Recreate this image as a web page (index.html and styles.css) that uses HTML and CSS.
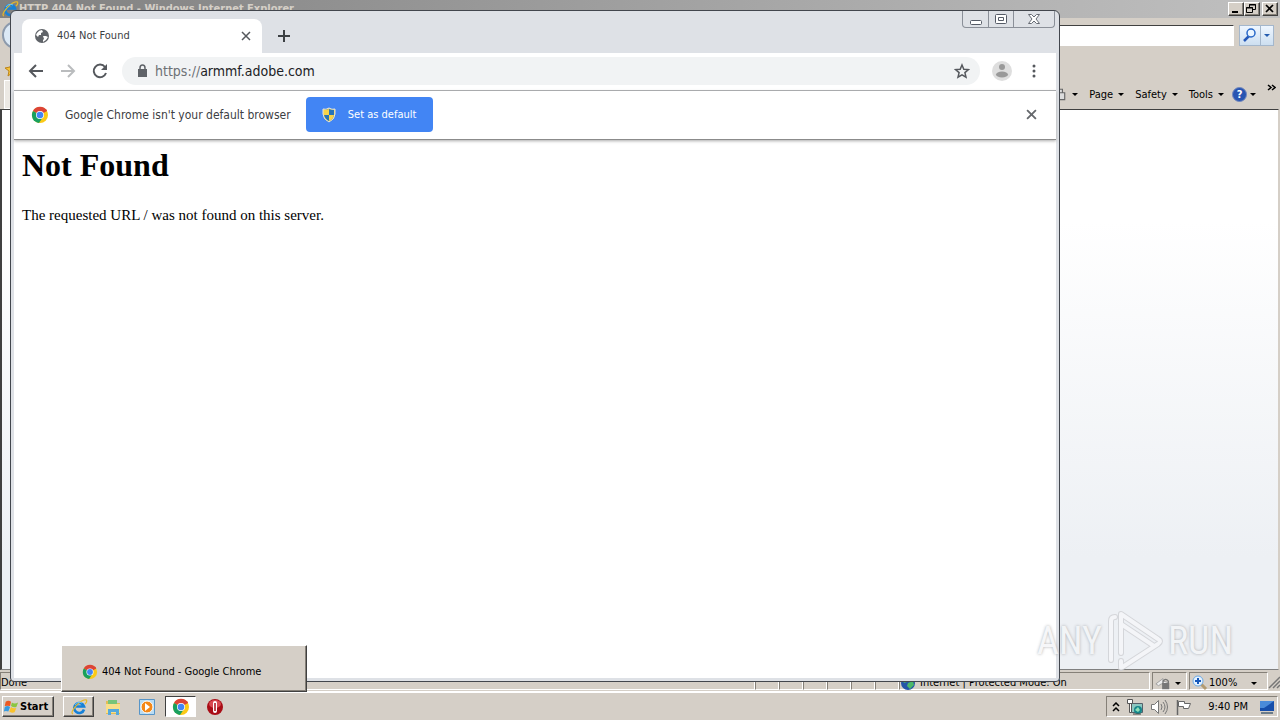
FILE: index.html
```html
<!doctype html>
<html lang="en">
  <head>
    <meta charset="UTF-8" />
    <meta name="viewport" content="width=device-width, initial-scale=1.0" />
    <title>404 Not Found</title>
    <link rel="stylesheet" href="styles.css">
  </head>

  <body>
    <svg class="defs" aria-hidden="true">
      <symbol id="chrome" viewBox="0 0 18 18">
        <circle cx="9" cy="9" r="8" fill="#fbc916" />
        <path d="M9 9 2 5a8 8 0 0 1 14 0z" fill="#dc4437" />
        <path d="M2 5a8 8 0 0 0 6 12l4-6-3-2z" fill="#18a05e" />
        <path d="M9 5h7l-1-2z" fill="#dc4437" />
        <circle cx="9" cy="9" r="4" fill="#fff" />
        <circle cx="9" cy="9" r="3.300" fill="#4385f5" />
      </symbol>
      <symbol id="ie" viewBox="0 0 18 18">
        <path d="M14 11.500A5 5 0 1 1 14 8.500H6" fill="none" stroke="#1681d8" stroke-width="2.600" />
        <path d="M3 16C-1 15 8 4 14 2c4-1 3 2 1 4" fill="none" stroke="#e8b928" stroke-width="1.200" />
        <path d="M5 7a5 5 0 0 1 7-2" fill="none" stroke="#6cc5f5" />
      </symbol>
      <symbol id="earth" viewBox="0 0 16 16">
        <circle cx="8" cy="8" r="7" fill="#2355a8" />
        <path d="M2 4l5-3 3 3-3 3-3 1zM8 8l5-2 1 4-4 4-3-3z" fill="#4cb968" />
      </symbol>
    </svg>

    <div class="desktop">
      <div class="ie">
        <div class="ie-title">
          <svg class="icon-18"><use href="#ie" /></svg>
          <span>HTTP 404 Not Found - Windows Internet Explorer</span>
          <div class="ie-controls">
            <button class="raised" aria-label="Minimize"><svg viewBox="0 0 14 12"><path d="M3 9h6" stroke="#000" stroke-width="2" /></svg></button>
            <button class="raised" aria-label="Restore"><svg viewBox="0 0 14 12" fill="none" stroke="#000"><path d="M4.500 4V1.500h6v5H8M4 2h7M1.500 4.500h6v5h-6zM1 5h7" /></svg></button>
            <button class="raised close" aria-label="Close"><svg viewBox="0 0 14 12"><path d="m3 2 7 7M10 2 3 9" stroke="#000" stroke-width="1.700" /></svg></button>
          </div>
        </div>
        <div class="ie-address">
          <button class="ie-back" aria-label="Back"></button>
          <input class="ie-url" type="text" aria-label="Address" />
          <div class="ie-search">
            <button aria-label="Search"><svg viewBox="0 0 16 16"><path d="m2 14 5-5" stroke="#2458b8" stroke-width="2.500" /><circle cx="9" cy="6" r="4" fill="#eaf5ff" stroke="#2868c8" stroke-width="1.500" /></svg></button>
            <button class="drop" aria-label="Search options"><i class="arrow blue"></i></button>
          </div>
        </div>
        <div class="ie-favorites"><svg viewBox="0 0 16 16"><path d="m8 1 2 5 5 1-4 3 1 5-4-3-4 3 1-5-4-3 5-1z" fill="#f4c23b" stroke="#bd8518" /></svg></div>
        <div class="ie-commands">
          <div class="ie-tab"></div>
          <button aria-label="Print"><svg viewBox="0 0 14 14"><path d="M2 5h10v6H2zM4 2h6v3H4z" fill="#ddd" stroke="#666" /></svg><i class="arrow"></i></button>
          <button>Page <i class="arrow"></i></button>
          <button>Safety <i class="arrow"></i></button>
          <button>Tools <i class="arrow"></i></button>
          <button class="help" aria-label="Help"><span>?</span><i class="arrow"></i></button>
          <svg class="more" viewBox="0 0 9 7"><path d="m1 1 3 2.500L1 6M5 1l3 2.500L5 6" fill="none" stroke="#000" stroke-width="1.500" /></svg>
        </div>
        <div class="ie-page"></div>
        <div class="ie-status">
          <span class="done">Done</span>
          <span class="cell"></span><span class="cell"></span><span class="cell"></span><span class="cell"></span><span class="cell"></span><span class="cell"></span>
          <span class="zone"><svg><use href="#earth" /></svg>Internet | Protected Mode: On</span>
          <span class="privacy"><svg viewBox="0 0 18 16"><path d="M1 9 9 3v3l5 1-2 3-5-1-3 2z" fill="#eee" stroke="#999" /><path d="M9 9V6q3-4 6 0v3" fill="none" stroke="#777" stroke-width="1.500" /><path d="M8 8h8v7H8z" fill="#777" /></svg><i class="arrow"></i></span>
          <span class="zoom"><svg viewBox="0 0 16 16"><path d="m9 9 5 5" stroke="#b29a70" stroke-width="3" /><circle cx="6" cy="6" r="5" fill="#e5f2ff" stroke="#6caae5" /><path d="M6 3v6M3 6h6" stroke="#1558bb" stroke-width="2" /></svg>100%<i class="arrow"></i></span>
          <svg class="grip" viewBox="0 0 12 14"><path d="M1 13 12 2M5 13l7-7M9 13l3-3" stroke="#777" stroke-width="1.500" /></svg>
        </div>
      </div>

      <div class="taskbar">
        <button class="raised start"><svg viewBox="0 0 18 18"><path d="M3 3q3-2 6 0L8 8Q5 7 2 8z" fill="#ed5a23" /><path d="M10 4q3 2 7 0l-2 5q-3 1-6-1z" fill="#8ac640" /><path d="M2 9q3-2 6 0l-2 5q-3-1-5 0z" fill="#399be0" /><path d="M9 9q3 2 6 1l-2 5q-3 1-6-1z" fill="#f9c22c" /></svg>Start</button>
        <button class="raised task" aria-label="Internet Explorer"><svg><use href="#ie" /></svg></button>
        <button class="task" aria-label="Windows Explorer"><svg viewBox="0 0 18 18"><path d="M2 3h5l1 2h8v11H2z" fill="#e3bd55" /><path d="M4 2h9v4H4z" fill="#78c478" /><path d="M2 6h14v9H2z" fill="#f8df8a" /><path d="M4 17v-6h11v6h-3v-3H7v3z" fill="#55a9dc" /></svg></button>
        <button class="task" aria-label="Media Player"><svg viewBox="0 0 18 18"><path d="M1.500 1.500h15v15h-15z" fill="#b8dcf4" stroke="#5795c8" /><circle cx="9" cy="9" r="6" fill="#f48818" stroke="#fff" /><path d="m7 5 5 4-5 4z" fill="#fff" /></svg></button>
        <button class="task pressed" aria-label="Google Chrome"><svg><use href="#chrome" /></svg></button>
        <button class="task" aria-label="Opera"><svg viewBox="0 0 18 18"><circle cx="9" cy="9" r="8" fill="#a90d16" /><ellipse cx="9" cy="6" rx="6" ry="4" fill="#d94950" /><rect x="7" y="3" width="4" height="12" rx="2" fill="#fff" /><path d="M9 5v8" stroke="#a90d16" stroke-width="1.500" /></svg></button>
        <div class="tray">
          <svg class="chevrons" viewBox="0 0 8 10"><path d="m1 4 3-3 3 3M1 9l3-3 3 3" fill="none" stroke="#000" stroke-width="1.500" /></svg>
          <svg viewBox="0 0 18 18"><path d="M5.500 5.500h11v9h-11z" fill="#8cc7c0" stroke="#55606a" /><circle cx="12" cy="12" r="4" fill="#16868a" /><path d="m9 12 3-3 2 3-2 2z" fill="#8de0b8" /><path d="M1.500 1.500h5v4h-5zM3.500 5.500v9h2v-9" fill="#fff" stroke="#555" /><path d="M7 16h8" stroke="#444" /></svg>
          <svg viewBox="0 0 18 18" fill="#fff" stroke="#777"><path d="M1.500 6.500h3l4-4v13l-4-4h-3z" /><path d="M11 6q2 3 0 6M13 4q4 5 0 10M15 2q5 7 0 14" fill="none" /></svg>
          <svg viewBox="0 0 18 18"><path d="M3.500 2v15" stroke="#666" stroke-width="1.500" /><path d="M4.500 3.500h6v2h6l-2 5h-5v-2h-5z" fill="#fff" stroke="#666" /></svg>
          <time>9:40 PM</time>
          <svg class="show-desktop" viewBox="0 0 16 16"><path d="M1 2h14v10H1z" fill="#164eaa" /><path d="M1 2h14L5 9H1z" fill="#4a8bd9" /><path d="M2 14h12" stroke="#6c7c8a" stroke-width="2" /></svg>
        </div>
      </div>

      <div class="chrome">
        <div class="tabs">
          <div class="tab">
            <svg viewBox="0 0 16 16"><circle cx="8" cy="8" r="7" fill="#5f6368" /><path d="M3 5q2-3 5-3l1 2-2 1v2H5L4 9 2 7zM9 8h3l2 1-2 3-3 2v-2l1-1z" fill="#fff" /></svg>
            <span>404 Not Found</span>
            <button aria-label="Close tab"><svg viewBox="0 0 10 10"><path d="m1 1 8 8M9 1 1 9" stroke="#55585d" stroke-width="1.500" /></svg></button>
          </div>
          <button class="new-tab" aria-label="New tab"><svg viewBox="0 0 12 12"><path d="M6 0v12M0 6h12" stroke="#3c4043" stroke-width="2" /></svg></button>
          <div class="caption">
            <button aria-label="Minimize"><svg viewBox="0 0 14 14"><rect x="1.500" y="8.500" width="11" height="4" rx="1" fill="#fff" stroke="#555b66" /></svg></button>
            <button aria-label="Maximize"><svg viewBox="0 0 14 14" fill="#fff" stroke="#555b66"><rect x="1.500" y="2.500" width="11" height="9" rx="1" /><path d="M4.500 5.500h5v3h-5z" /></svg></button>
            <button aria-label="Close"><svg viewBox="0 0 14 14"><path d="M1.500 2.500h3L7 5l2.500-2.500h3L9 7l3.500 4.500h-3L7 9l-2.500 2.500h-3L5 7z" fill="#fff" stroke="#666b74" /></svg></button>
          </div>
        </div>
        <div class="toolbar">
          <button aria-label="Back"><svg viewBox="0 0 16 16" fill="none" stroke="#55585d" stroke-width="2"><path d="M15 8H2M8 2 2 8l6 6" /></svg></button>
          <button aria-label="Forward" disabled><svg viewBox="0 0 16 16" fill="none" stroke="#babcbe" stroke-width="2"><path d="M1 8h13M8 2l6 6-6 6" /></svg></button>
          <button aria-label="Reload"><svg viewBox="0 0 16 16" fill="none" stroke="#55585d" stroke-width="2"><path d="M13 4a6.300 6.300 0 1 0 1 6" /><path d="M15 1v6H9z" fill="#55585d" stroke="none" /></svg></button>
          <div class="omnibox">
            <svg viewBox="0 0 12 14"><path d="M2 5h9v8H2z" fill="#5f6368" /><path d="M4 6V4q0-3 2.500-3T9 4v2" fill="none" stroke="#5f6368" stroke-width="1.500" /></svg>
            <a href="#"><span>https://</span>armmf.adobe.com</a>
            <button aria-label="Bookmark"><svg viewBox="0 0 16 16"><path d="m8 2 1.800 4.200 4.700.4-3.600 3 1.100 4.600L8 11.800l-4 2.400 1.100-4.600-3.600-3 4.700-.4z" fill="none" stroke="#55585d" stroke-width="1.500" /></svg></button>
          </div>
          <button class="avatar" aria-label="Profile"><svg viewBox="0 0 20 20"><circle cx="10" cy="10" r="10" fill="#dedede" /><circle cx="10" cy="6" r="3" fill="#999" /><ellipse cx="10" cy="13.500" rx="6" ry="3" fill="#999" /></svg></button>
          <button class="menu" aria-label="Menu"><svg viewBox="0 0 4 14" fill="#55585d"><circle cx="2" cy="2" r="1.500" /><circle cx="2" cy="7" r="1.500" /><circle cx="2" cy="12" r="1.500" /></svg></button>
        </div>
        <div class="infobar">
          <svg class="icon-18"><use href="#chrome" /></svg>
          <span>Google Chrome isn't your default browser</span>
          <button class="set-default"><svg viewBox="0 0 14 16"><path d="M7 1q3 2 6 1v5q0 5-6 8-6-3-6-8V2q3 1 6-1z" fill="#f7d34a" stroke="#e2e4dd" /><path d="M7 8h5q-1 4-5 6zM2 3q3 0 5-1v6H2z" fill="#2674b8" /><path d="M2 3q3 0 5-1v6H2z" fill="#f7d34a" /><path d="M7 2q2 1 5 1v5H7zM2 8h5v6Q3 12 2 8z" fill="#2674b8" /><path d="M7 8h5q-1 4-5 6z" fill="#f7d34a" /></svg>Set as default</button>
          <button class="dismiss" aria-label="Dismiss"><svg viewBox="0 0 10 10"><path d="m1 1 8 8M9 1 1 9" stroke="#66696d" stroke-width="1.700" /></svg></button>
        </div>
        <div class="page">
          <h1>Not Found</h1>
          <p>The requested URL / was not found on this server.</p>
        </div>
      </div>

      <div class="preview raised">
        <svg><use href="#chrome" /></svg>
        <span>404 Not Found - Google Chrome</span>
      </div>

      <div class="watermark">
        <span>ANY</span>
        <svg viewBox="0 0 58 64" fill="none" stroke-linejoin="round" stroke-linecap="round">
          <g stroke="#cfd0d4" stroke-width="6"><path d="M5 51V12q0-4 4-4" /><path d="M15 44V5l37 25q4 2 0 5L15 59v-7" /><path d="M15 15l33 22" /></g>
          <g stroke="#f6f7f9" stroke-width="4"><path d="M5 51V12q0-4 4-4" /><path d="M15 44V5l37 25q4 2 0 5L15 59v-7" /><path d="M15 15l33 22" /></g>
        </svg>
        <span>RUN</span>
      </div>
    </div>
  </body>
</html>
```
FILE: styles.css
```css
* {
  box-sizing: border-box;
}

body {
  margin: 0;
  font-family: "DejaVu Sans Condensed", "DejaVu Sans", sans-serif;
  font-size: 11px;
  line-height: 16px;
  color: #000;
}

button {
  display: flex;
  align-items: center;
  justify-content: center;
  padding: 0;
  border: 0;
  background: none;
  font: inherit;
  color: inherit;
}

svg {
  display: block;
  flex: none;
  width: 16px;
  height: 16px;
}

.defs {
  position: absolute;
  width: 0;
  height: 0;
}

.icon-18 {
  width: 18px;
  height: 18px;
}

.desktop {
  position: relative;
  display: flex;
  flex-direction: column;
  height: 100vh;
  overflow: hidden;
  background: #d5cfc7;
}

.raised {
  border: 1px solid;
  border-color: #fff #404040 #404040 #fff;
  box-shadow: inset -1px -1px #858078;
  background: #d5cfc7;
}

.arrow {
  border: 3px solid transparent;
  border-top-color: #000;
  border-bottom: 0;
}

.arrow.blue {
  border-top-color: #245caf;
}

/* Internet Explorer */
.ie {
  display: flex;
  flex: 1;
  flex-direction: column;
  min-height: 0;
}

.ie-title {
  display: flex;
  align-items: center;
  height: 18px;
  padding: 0 2px 0 1px;
  background: linear-gradient(90deg, #808080, #c0c0c0);
  color: #d5cfc7;
  font-weight: bold;
}

.ie-controls {
  display: flex;
  margin-left: auto;
}

.ie-controls button {
  width: 16px;
  height: 14px;
}

.ie-controls svg {
  width: 14px;
  height: 12px;
}

.ie-controls .close {
  margin-left: 2px;
}

.ie-address {
  display: flex;
  align-items: center;
  height: 34px;
  padding: 0 6px 0 2px;
}

.ie-back {
  width: 28px;
  height: 28px;
  border: 2px solid #8c9aac;
  border-radius: 50%;
  background: #dce9f5;
}

.ie-url {
  flex: 1;
  height: 21px;
  margin: 0 5px 0 60px;
  border: 1px solid;
  border-color: #404040 #fff #fff #404040;
  background: #fff;
}

.ie-search {
  display: flex;
  height: 21px;
  border: 1px solid #a4b7cc;
  background: linear-gradient(#eef6ff, #cddff0);
}

.ie-search button {
  width: 20px;
}

.ie-search .drop {
  width: 13px;
  border-left: 1px solid #a4b7cc;
}

.ie-favorites {
  height: 28px;
  padding: 9px 4px;
}

.ie-commands {
  display: flex;
  align-items: center;
  gap: 11px;
  height: 29px;
  padding: 0 4px;
}

.ie-commands button {
  gap: 5px;
}

.ie-tab {
  align-self: stretch;
  width: 100px;
  margin-right: auto;
  border: 1px solid #fff;
  background: #ece9e4;
}

.ie-commands .help {
  gap: 3px;
  margin-left: -3px;
}

.help span {
  width: 15px;
  height: 15px;
  border: 1px solid #7288bd;
  border-radius: 50%;
  background: #2855b2;
  color: #fff;
  font-weight: bold;
  line-height: 13px;
}

.ie-commands .more {
  align-self: flex-start;
  width: 9px;
  height: 7px;
  margin-top: 4px;
}

.ie-page {
  flex: 1;
  margin-right: 1px;
  border: 1px solid #808080;
  border-top-color: #404040;
  border-left: 2px solid #404040;
  border-right-color: #d5cfc7;
  background: linear-gradient(#fff 20%, #edf0f4 80%);
}

.ie-status {
  display: flex;
  height: 22px;
  padding: 2px 0 1px;
  border-bottom: 1px solid #fff;
}

.ie-status span {
  display: flex;
  align-items: center;
  padding-top: 4px;
  border: 1px solid;
  border-color: #858078 #fff #fff #858078;
}

.ie-status .done {
  flex: 1;
}

.ie-status .cell {
  width: 24px;
}

.ie-status .zone {
  gap: 4px;
  width: 251px;
}

.ie-status .privacy {
  gap: 4px;
  width: 35px;
  margin: 0 2px;
  padding-left: 2px;
}

.ie-status .zoom {
  gap: 1px;
  width: 79px;
  padding: 4px 10px 0 2px;
}

.zoom .arrow {
  margin-left: auto;
}

.grip {
  align-self: flex-end;
  width: 12px;
}

/* taskbar */
.taskbar {
  display: flex;
  gap: 3px;
  height: 28px;
  padding: 3px 2px;
  border-top: 1px solid #fff;
}

.start {
  justify-content: flex-start;
  gap: 1px;
  width: 52px;
  margin-right: 6px;
  font-weight: bold;
}

.task {
  width: 31px;
}

.task svg {
  width: 18px;
  height: 18px;
}

.task.pressed {
  border: 1px solid;
  border-color: #404040 #fff #fff #404040;
  background: #fff;
}

.tray {
  display: flex;
  align-items: center;
  gap: 6px;
  margin-left: auto;
  padding: 0 2px 0 5px;
  border: 1px solid;
  border-color: #858078 #fff #fff #858078;
}

.tray svg {
  width: 18px;
  height: 18px;
}

.tray .chevrons {
  width: 8px;
  height: 10px;
}

.tray time {
  margin: 0 5px 0 10px;
}

.tray .show-desktop {
  width: 16px;
  height: 16px;
}

/* Chrome window */
.chrome {
  position: absolute;
  inset: 10px 220px 38px 10px;
  display: flex;
  flex-direction: column;
  overflow: hidden;
  padding: 0 3px 3px;
  border: 1px solid #42464d;
  border-radius: 6px 6px 4px 4px;
  background: #dee1e6;
}

.tabs {
  display: flex;
  height: 42px;
  padding-left: 8px;
}

.tab {
  display: flex;
  align-items: center;
  gap: 7px;
  width: 240px;
  margin-top: 8px;
  padding: 0 10px 0 12px;
  border-radius: 8px 8px 0 0;
  background: #fff;
  color: #3c4043;
}

.tab button {
  width: 12px;
  height: 16px;
  margin-left: auto;
}

.tab button svg {
  width: 10px;
  height: 10px;
}

.new-tab {
  width: 28px;
  height: 28px;
  margin: 11px 0 0 8px;
}

.new-tab svg {
  width: 12px;
  height: 12px;
}

.caption {
  display: flex;
  height: 17px;
  margin: 0 1px 0 auto;
  border: 1px solid #8a8f98;
  border-top: 0;
  border-radius: 0 0 4px 4px;
}

.caption button {
  width: 25px;
}

.caption button + button {
  border-left: 1px solid #8a8f98;
}

.caption button:last-child {
  width: 41px;
}

.caption svg {
  width: 14px;
  height: 14px;
}

.toolbar {
  display: flex;
  align-items: center;
  gap: 16px;
  height: 38px;
  padding: 0 16px 2px 14px;
  border-bottom: 1px solid #a9abae;
  background: #fff;
}

.omnibox {
  display: flex;
  flex: 1;
  align-items: center;
  height: 28px;
  margin: 0 -4px 0 -2px;
  padding: 0 10px 0 12px;
  border-radius: 14px;
  background: #f1f3f4;
  font-size: 14px;
}

.omnibox svg {
  height: 14px;
}

.omnibox a {
  margin-left: 5px;
  color: #202124;
  text-decoration: none;
}

.omnibox a span {
  color: #6d7175;
}

.omnibox button {
  margin-left: auto;
}

.omnibox button svg {
  height: 16px;
}

.avatar svg {
  width: 20px;
  height: 20px;
}

.menu svg {
  width: 12px;
  height: 14px;
}

.infobar {
  position: relative;
  display: flex;
  align-items: center;
  height: 49px;
  padding: 0 19px 1px 17px;
  border-bottom: 1px solid #8b8b8b;
  box-shadow: 0 1px 3px #aaa;
  background: #fff;
  color: #3c4043;
  font-size: 12px;
}

.infobar span {
  margin: 0 15px 0 16px;
}

.set-default {
  gap: 12px;
  width: 127px;
  height: 35px;
  border-radius: 4px;
  background: #4285f4;
  color: #fff;
  font-size: 11px;
}

.set-default svg {
  width: 14px;
}

.dismiss {
  margin-left: auto;
}

.dismiss svg {
  width: 11px;
  height: 11px;
}

.page {
  flex: 1;
  padding: 7px 8px;
  background: #fff;
  font-family: "Liberation Serif", "Times New Roman", serif;
  font-size: 15px;
  line-height: 18px;
}

.page h1 {
  margin: 0 0 23px;
  font-size: 32px;
  line-height: 36px;
}

.page p {
  margin: 0;
}

/* taskbar preview */
.preview {
  position: absolute;
  bottom: 28px;
  left: 61px;
  display: flex;
  align-items: center;
  gap: 4px;
  width: 246px;
  height: 47px;
  padding: 7px 20px 0;
}

.watermark {
  position: absolute;
  right: 47px;
  bottom: 47px;
  display: flex;
  align-items: center;
  gap: 4px;
  color: #f4f5f7;
  font-family: "Roboto Condensed", "Liberation Sans Narrow", "Liberation Sans", sans-serif;
  font-size: 38px;
  line-height: 64px;
  text-shadow: 0 0 3px #9a9ca0;
  opacity: 0.8;
}

.watermark svg {
  width: 58px;
  height: 64px;
}
```
